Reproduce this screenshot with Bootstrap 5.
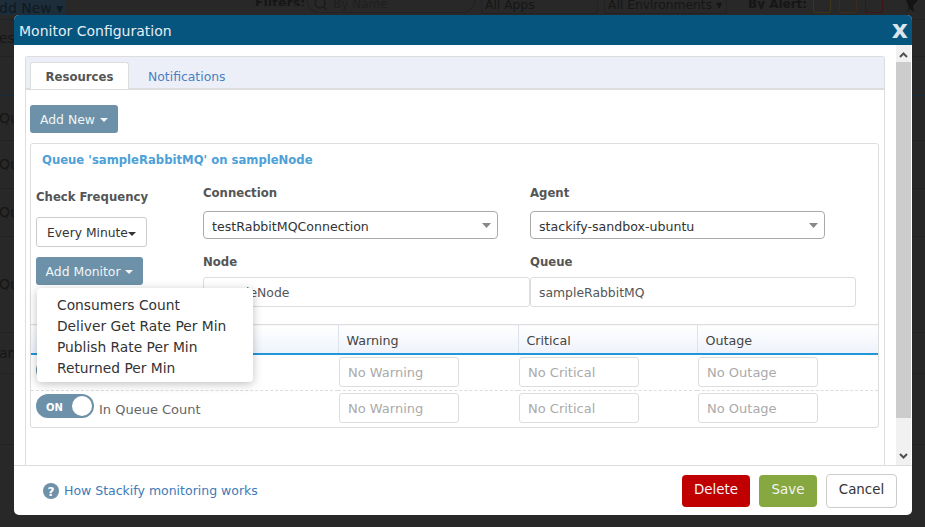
<!DOCTYPE html>
<html lang="en">
<head>
<meta charset="utf-8">
<title>Monitor Configuration</title>
<link href="https://cdn.jsdelivr.net/npm/bootstrap@5.3.0/dist/css/bootstrap.min.css" rel="stylesheet">
<style>
html,body{height:100%;overflow:hidden}
body{background:#282828;font-family:"DejaVu Sans",Verdana,sans-serif;font-size:13px;color:#555}
/* dimmed page behind */
.bg-bar{height:20px;border-bottom:1px solid #222;color:#161616;font-size:12.3px;line-height:10px;align-items:flex-start;overflow:hidden}
.bg-bar>div{flex-shrink:0;overflow:hidden}
.bg-new{width:65px;height:15px;background:#1d2d39;color:#0f1a22;padding-left:0;white-space:nowrap;line-height:16px;font-size:14px;text-indent:-1px}
.bg-filter{margin-left:190px;font-weight:700;width:52px;line-height:6px;font-size:12.5px}
.bg-search{width:168px;height:13px;border:1px solid #222;border-top:0;border-radius:0 0 12px 12px;padding-left:6px;color:#1f1f1f;line-height:8px;display:flex;gap:5px;font-size:12px}
.bg-sel{height:14px;border:1px solid #222;border-top:0;border-radius:0 0 3px 3px;padding-left:3px;white-space:nowrap}
.bg-a{width:117px;margin-left:6px}.bg-e{width:123px;margin-left:6px}
.bg-alert{margin-left:21px;width:65px;font-weight:700;white-space:nowrap;font-size:12px;line-height:9px}
.bg-sq{width:18px;height:13px;border:1px solid #333;border-top:0;border-radius:0 0 3px 3px;margin-right:8px}
.sq-y{border-color:#3a3718}.sq-o{border-color:#3c2a1a}.sq-r{border-color:#401414}
.bg-pin{margin-left:14px;line-height:0}
.bg-row{border-bottom:1px solid #222;color:#161616;font-size:14px;overflow:hidden;white-space:nowrap;padding-left:0;align-items:center}
.bg-row span{margin-left:-1px}
.r1{height:37px}.r2{height:39px;border-bottom-color:#142c3c}.r3{height:45px}.r4{height:48px}.r5{height:48px}.r6{height:96px}.r7{height:41px}.r8{height:71px}
/* modal */
.dlg-wrap{padding:15px 13px 12px 14px}
.dlg{height:500px;border:0;border-radius:5px;overflow:hidden;background:#fff}
.dlg-head{height:30px;background:#05557f;color:#e4edf3;padding:0 4px 0 5px;border:0;border-radius:0;font-size:14px}
.dlg-name{padding-top:2px}
.dlg-x{font-size:25px;font-weight:700;line-height:30px;color:#dbe4ec;height:30px}
.dlg-main{height:420px;padding:0}
.dlg-scroll{padding:11px 11px 0 11px;min-width:0}
.scr{width:15px;margin-right:1px;background:#f1f1f1}
.scr-btn{height:17px;line-height:0}
.scr-up{padding-top:2px}
.scr-down{padding-bottom:2px}
.scr-thumb{height:356px;background:#ccc}
.tab-box{border:1px solid #ddd;border-bottom:0;border-radius:3px 3px 0 0;height:409px}
.tab-head{height:33px;background:#eceff7;padding:5px 0 0 4px;border-bottom:2px solid #ddd;gap:19px}
.tab-head .nav-link{font-size:12.4px;padding:0;line-height:29px;border:0;color:#4a7fc1;background:none;border-radius:3px 3px 0 0}
.tab-head .nav-link.active{width:99px;text-align:center;background:#fff;color:#555;font-weight:700;font-size:11.7px;line-height:28px;border:1px solid #ddd;border-bottom:0;height:27px;margin-bottom:-1px}
.tab-body{padding:15px 5px 0 4px}
.act-btn{background:#6d91a8;color:#f2f5f7;border:0;border-radius:3px;font-size:12.4px;height:28px;padding:0 10px;line-height:29px;white-space:nowrap}
.act-btn:hover{background:#6d91a8;color:#f2f5f7}
.caret-d{display:inline-block;border-top:4px solid currentColor;border-left:4px solid transparent;border-right:4px solid transparent;vertical-align:2px;margin-left:1px}
.mon-panel{margin-top:10px;border:1px solid #ddd;border-radius:3px;height:285px;width:849px}
.mon-title{color:#4da0d8;font-weight:700;font-size:11.65px;line-height:16px;padding:8px 0 0 11px;height:39px}
.left-col{width:172px;padding-left:5px}
.mid-col{width:327px}
.fld-lbl{font-weight:700;line-height:18px;color:#555;font-size:11.7px;margin:0;padding-top:1px}
.lbl-freq{margin:4px 0 11px}
.lbl-a{margin-bottom:9px}.lbl-b{margin:13px 0 6px}
.freq-btn{width:111px;height:30px;border:1px solid #ccc;background:#fff;border-radius:3px;color:#333;font-size:12.3px;padding:2px 0 0;white-space:nowrap}
.freq-btn:hover{background:#fff;color:#333;border-color:#ccc}
.freq-btn .caret-d{margin-left:0;vertical-align:1px}
.add-mon{margin-top:10px;width:107px;padding:0}
.sel-x{width:295px;height:28px;border:1px solid #aaa;border-radius:4px;font-size:12.6px;color:#333;padding:3px 8px 0;line-height:23px;background-position:right 6px center;background-size:9px 5px;background-image:url("data:image/svg+xml,%3Csvg xmlns='http://www.w3.org/2000/svg' viewBox='0 0 9 5'%3E%3Cpath d='M0 0h9L4.5 5z' fill='%23888'/%3E%3C/svg%3E")}
.inp-x{height:30px;border:1px solid #ddd;border-radius:3px;font-size:12.4px;color:#555;padding:0 8px}
.mid-col:last-child .inp-x{width:326px}
.inp-x::placeholder{color:#aaa;opacity:1}
.menu-x{display:block;top:31px;left:1px;width:216px;height:94px;padding:7px 0 0;margin:0;border:0;border-radius:4px;box-shadow:0 2px 10px rgba(0,0,0,.25);z-index:5;font-size:13px}
.menu-x .dropdown-item{padding:0 20px;line-height:21px;color:#333;font-size:13.8px}
.mon-tbl{margin:17px 0 0;table-layout:fixed;width:847px;border-top:1px solid #ddd;color:#555}
.mon-tbl th{height:29px;padding:3px 8px 0;font-weight:400;color:#444;font-size:12.7px;background:linear-gradient(#fff,#eef2fa);border:0;border-left:1px solid #dde3ee;border-bottom:2px solid #2196d8;vertical-align:middle}
.mon-tbl th:first-child{border-left:0}
.mon-tbl td{padding:2px 0 3px 1px;border:0;height:36px;border-bottom:1px dashed #ddd;vertical-align:top}
.mon-tbl tr:last-child td{border-bottom:0;padding-top:2px}
.mon-tbl td:first-child{padding:3px 0 0 5px}
.mon-tbl tr:last-child td:first-child{padding-top:3px}
.cell-inp{width:120px;font-size:13px;padding:2px 8px 0}
.sw{display:inline-flex;width:58px;height:24px;background:#6d91a8;border-radius:12px;align-items:center;justify-content:space-between;padding:0 2px 0 10px;color:#fff;font-weight:700;font-size:10px;margin-right:5px;vertical-align:top}
.sw-on{padding-top:3px}
.sw-dot{width:20px;height:20px;border-radius:50%;background:#fff;display:block;margin-left:auto}
.sw-text{color:#666;font-size:13px;line-height:32px}
.dlg-foot{height:50px;border-top:1px solid #ddd;padding:0 15px 0 29px;border-radius:0;margin:0;flex-wrap:nowrap}
.help-link{color:#3d7ab8;text-decoration:none;font-size:12.5px;gap:5px;padding-top:1px}
.help-link svg{margin-top:-1px}
.foot-btn{height:32px;border:0;border-radius:4px;font-size:13.4px;padding:0 0 1px;color:#f4f4f4;margin:0 0 0 9px}
.b-del{width:68px;background:#c00000}.b-del:hover{background:#c00000;color:#fff}
.b-save{width:58px;background:#87a840}.b-save:hover{background:#87a840;color:#fff}
.b-can{width:71px;height:34px;background:#fff;color:#333;border:1px solid #ccc}.b-can:hover{background:#fff;color:#333;border-color:#ccc}
</style>
</head>
<body>
<div class="bg-bar d-flex">
  <div class="bg-new">dd New ▾</div>
  <div class="bg-filter">Filters:</div>
  <div class="bg-search"><svg width="14" height="12" viewBox="0 0 14 12"><circle cx="6" cy="3" r="5" fill="none" stroke="#1c1c1c" stroke-width="1.5"/><path d="M10 7l3 3" stroke="#1c1c1c" stroke-width="1.5"/></svg><span>By Name</span></div>
  <div class="bg-sel bg-a">All Apps</div>
  <div class="bg-sel bg-e">All Environments ▾</div>
  <div class="bg-alert">By Alert:</div>
  <div class="bg-sq sq-y"></div><div class="bg-sq sq-o"></div><div class="bg-sq sq-r"></div>
  <div class="bg-pin"><svg width="14" height="15" viewBox="0 0 14 15"><path d="M1 0h12L8 6l1 6-4-3-4 4 3-5z" fill="#141414"/></svg></div>
</div>
<div class="bg-row r1 d-flex"><span>ess</span></div>
<div class="bg-row r2 d-flex"></div>
<div class="bg-row r3 d-flex"><span>Que</span></div>
<div class="bg-row r4 d-flex"><span>Que</span></div>
<div class="bg-row r5 d-flex"><span>Que</span></div>
<div class="bg-row r6 d-flex"><span>Que</span></div>
<div class="bg-row r7 d-flex"><span>am</span></div>
<div class="bg-row r8 d-flex"></div>

<div class="dlg-wrap position-fixed top-0 start-0 w-100 h-100">
  <div class="modal-content dlg">
    <div class="modal-header dlg-head d-flex justify-content-between align-items-center">
      <span class="dlg-name">Monitor Configuration</span>
      <span class="dlg-x">x</span>
    </div>
    <div class="modal-body dlg-main d-flex">
      <div class="dlg-scroll flex-grow-1">
        <div class="tab-box">
          <ul class="nav tab-head">
            <li class="nav-item"><a class="nav-link active" href="#">Resources</a></li>
            <li class="nav-item"><a class="nav-link" href="#">Notifications</a></li>
          </ul>
          <div class="tab-body">
            <button class="btn act-btn" type="button">Add New <span class="caret-d"></span></button>
            <div class="mon-panel">
              <div class="mon-title">Queue 'sampleRabbitMQ' on sampleNode</div>
              <div class="d-flex">
                <div class="left-col position-relative">
                  <p class="fld-lbl lbl-freq">Check Frequency</p>
                  <button class="btn freq-btn d-block" type="button">Every Minute<span class="caret-d"></span></button>
                  <div class="position-relative">
                    <button class="btn act-btn add-mon d-block" type="button">Add Monitor <span class="caret-d"></span></button>
                    <ul class="dropdown-menu menu-x position-absolute">
                      <li><a class="dropdown-item" href="#">Consumers Count</a></li>
                      <li><a class="dropdown-item" href="#">Deliver Get Rate Per Min</a></li>
                      <li><a class="dropdown-item" href="#">Publish Rate Per Min</a></li>
                      <li><a class="dropdown-item" href="#">Returned Per Min</a></li>
                    </ul>
                  </div>
                </div>
                <div class="mid-col">
                  <p class="fld-lbl lbl-a">Connection</p>
                  <select class="form-select sel-x"><option>testRabbitMQConnection</option></select>
                  <p class="fld-lbl lbl-b">Node</p>
                  <input class="form-control inp-x" value="sampleNode">
                </div>
                <div class="mid-col">
                  <p class="fld-lbl lbl-a">Agent</p>
                  <select class="form-select sel-x"><option>stackify-sandbox-ubuntu</option></select>
                  <p class="fld-lbl lbl-b">Queue</p>
                  <input class="form-control inp-x" value="sampleRabbitMQ">
                </div>
              </div>
              <table class="table mon-tbl">
                <colgroup><col style="width:307px"><col style="width:180px"><col style="width:179px"><col></colgroup>
                <thead><tr><th></th><th>Warning</th><th>Critical</th><th>Outage</th></tr></thead>
                <tbody>
                  <tr>
                    <td><span class="sw"><span class="sw-dot"></span></span></td>
                    <td><input class="form-control inp-x cell-inp" placeholder="No Warning"></td>
                    <td><input class="form-control inp-x cell-inp" placeholder="No Critical"></td>
                    <td><input class="form-control inp-x cell-inp" placeholder="No Outage"></td>
                  </tr>
                  <tr>
                    <td><span class="sw"><span class="sw-on">ON</span><span class="sw-dot"></span></span><span class="sw-text">In Queue Count</span></td>
                    <td><input class="form-control inp-x cell-inp" placeholder="No Warning"></td>
                    <td><input class="form-control inp-x cell-inp" placeholder="No Critical"></td>
                    <td><input class="form-control inp-x cell-inp" placeholder="No Outage"></td>
                  </tr>
                </tbody>
              </table>
            </div>
          </div>
        </div>
      </div>
      <div class="scr d-flex flex-column">
        <div class="scr-btn scr-up d-flex align-items-center justify-content-center"><svg width="9" height="6" viewBox="0 0 9 6"><path d="M1 5l3.5-3.5L8 5" fill="none" stroke="#505050" stroke-width="2"/></svg></div>
        <div class="scr-thumb"></div>
        <div class="flex-grow-1"></div>
        <div class="scr-btn scr-down d-flex align-items-center justify-content-center"><svg width="9" height="6" viewBox="0 0 9 6"><path d="M1 1l3.5 3.5L8 1" fill="none" stroke="#505050" stroke-width="2"/></svg></div>
      </div>
    </div>
    <div class="modal-footer dlg-foot d-flex justify-content-between align-items-center">
      <a class="help-link d-flex align-items-center" href="#">
        <svg width="16" height="16" viewBox="0 0 16 16"><circle cx="8" cy="8" r="8" fill="#6d91a8"/><text x="8" y="12.5" text-anchor="middle" font-family="DejaVu Sans" font-weight="700" font-size="12" fill="#fff">?</text></svg>
        <span>How Stackify monitoring works</span>
      </a>
      <div class="d-flex align-items-center">
        <button class="btn foot-btn b-del" type="button">Delete</button>
        <button class="btn foot-btn b-save" type="button">Save</button>
        <button class="btn foot-btn b-can" type="button">Cancel</button>
      </div>
    </div>
  </div>
</div>
<script src="https://cdn.jsdelivr.net/npm/bootstrap@5.3.0/dist/js/bootstrap.bundle.min.js"></script>
</body>
</html>
